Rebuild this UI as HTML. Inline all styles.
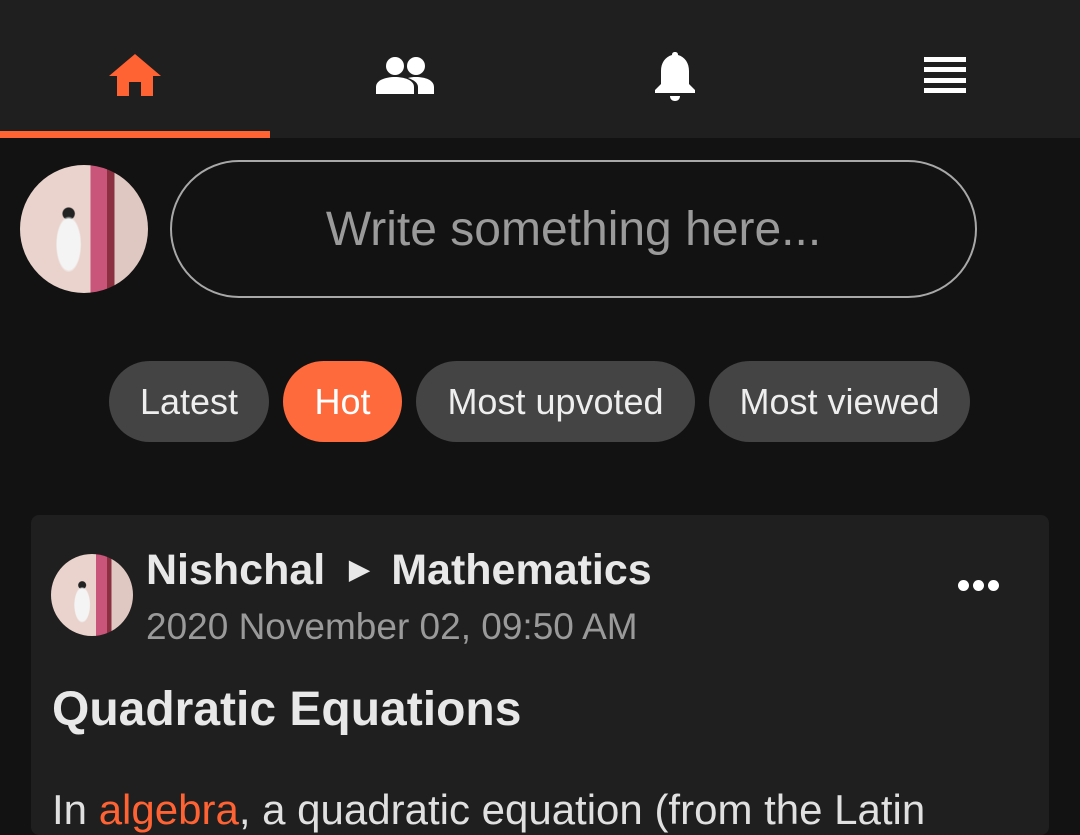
<!DOCTYPE html>
<html><head><style>
*{margin:0;padding:0;box-sizing:border-box}
body{width:1080px;height:808px;overflow:hidden;background:#121212;font-family:"Liberation Sans",sans-serif;position:relative}
.hdr{position:absolute;left:0;top:0;width:1080px;height:138px;background:#1f1f1f}
.ul{position:absolute;left:0;top:131px;width:270px;height:7px;background:#ff6233}
.ic{position:absolute}
.av{position:absolute;border-radius:50%;background:radial-gradient(ellipse 10% 22% at 38% 62%,#f4f4f4 0 90%,transparent 100%),radial-gradient(circle at 38% 38%,#222 0 5%,transparent 6%),linear-gradient(90deg,#e9d3cc 0 55%,#c9567a 55% 68%,#8a3040 68% 74%,#e0c8c2 74%);overflow:hidden}
.pill{position:absolute;left:170px;top:160px;width:807px;height:138px;border:2px solid #a8a8a8;border-radius:69px;color:#9a9a9a;font-size:48px;display:flex;align-items:center;justify-content:center}
.chip{position:absolute;top:361px;height:81px;border-radius:41px;background:#444;color:#eee;font-size:36px;display:flex;align-items:center;justify-content:center}
.card{position:absolute;left:31px;top:515px;width:1018px;height:320px;background:#1f1f1f;border-radius:8px}
.t{position:absolute;white-space:nowrap}
.dot{position:absolute;top:580px;width:11px;height:11px;border-radius:50%;background:#fff}
</style></head><body>
<div class="hdr"></div><div class="ul"></div>
<svg class="ic" style="left:108px;top:52px" width="54" height="46" viewBox="0 0 54 46"><path d="M27 2 L53 24 H45 V44 H33 V30 H21 V44 H9 V24 H1 Z" fill="#ff6233"/></svg>
<svg class="ic" style="left:376px;top:56px" width="58" height="38" viewBox="0 0 58 38"><circle cx="19" cy="10" r="9" fill="#fff"/><circle cx="40" cy="10" r="9" fill="#fff"/><path d="M0 38 V31 C0 24 10 21 19 21 C28 21 38 24 38 31 V38Z" fill="#fff"/><path d="M32 22 C36 21 38 21 40 21 C49 21 58 24 58 31 V38 H42 V31 C42 27 38 24 32 22Z" fill="#fff"/></svg>
<svg class="ic" style="left:653px;top:50px" width="44" height="52" viewBox="0 0 44 52"><path d="M22 2 C24 2 25 3 25 5 C32 7 36 13 36 21 V34 L42 40 V43 H2 V40 L8 34 V21 C8 13 12 7 19 5 C19 3 20 2 22 2Z" fill="#fff"/><path d="M17 46 H27 C27 49 25 51 22 51 C19 51 17 49 17 46Z" fill="#fff"/></svg>
<svg class="ic" style="left:924px;top:57px" width="42" height="37" viewBox="0 0 42 37"><g fill="#fff"><rect y="0" width="42" height="5"/><rect y="10" width="42" height="5"/><rect y="21" width="42" height="5"/><rect y="31" width="42" height="5"/></g></svg>
<div class="av" style="left:20px;top:165px;width:128px;height:128px"></div>
<div class="pill">Write something here...</div>
<div class="chip" style="left:109px;width:160px">Latest</div>
<div class="chip" style="left:283px;width:119px;background:#ff6a3d;color:#fff">Hot</div>
<div class="chip" style="left:416px;width:279px">Most upvoted</div>
<div class="chip" style="left:709px;width:261px">Most viewed</div>
<div class="card"></div>
<div class="av" style="left:51px;top:554px;width:82px;height:82px"></div>
<div class="t" style="left:146px;top:546px;font-size:43px;font-weight:bold;color:#e8e8e8">Nishchal<span style="font-size:26px;position:relative;top:-6px;margin:0 22px 0 24px">▶</span>Mathematics</div>
<div class="t" style="left:146px;top:606px;font-size:37px;color:#9a9a9a">2020 November 02, 09:50 AM</div>
<div class="dot" style="left:958px"></div><div class="dot" style="left:973px"></div><div class="dot" style="left:988px"></div>
<div class="t" style="left:52px;top:682px;font-size:48px;font-weight:bold;color:#e8e8e8">Quadratic Equations</div>
<div class="t" style="left:52px;top:786px;font-size:42px;color:#e0e0e0">In <span style="color:#ff6233">algebra</span>, a quadratic equation (from the Latin</div>
</body></html>
